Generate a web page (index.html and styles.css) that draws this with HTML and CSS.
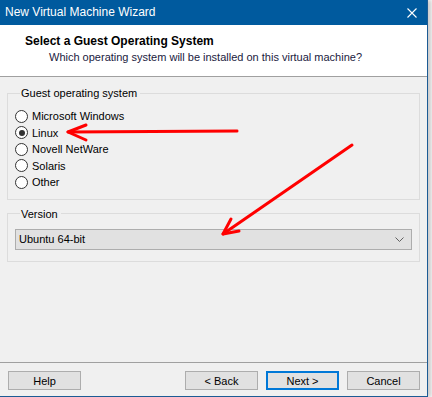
FILE: index.html
```html
<!DOCTYPE html>
<html>

<head>
    <title>New Virtual Machine Wizard</title>
    <link rel="stylesheet" href="styles.css">
</head>

<body>
    <div class="window">
        <div class="titlebar">
            <span class="title">New Virtual Machine Wizard</span>
            <svg class="close" width="10" height="10" viewBox="0 0 10 10">
                <path d="M0.5 0.5 L9.5 9.5 M9.5 0.5 L0.5 9.5" stroke="#ffffff" stroke-width="1.1" fill="none" />
            </svg>
        </div>

        <div class="header">
            <h1>Select a Guest Operating System</h1>
            <p>Which operating system will be installed on this virtual machine?</p>
        </div>

        <div class="content">
            <fieldset class="group">
                <legend>Guest operating system</legend>
                <label class="radio-row"><input type="radio" name="os"> Microsoft Windows</label>
                <label class="radio-row"><input type="radio" name="os" checked> Linux</label>
                <label class="radio-row"><input type="radio" name="os"> Novell NetWare</label>
                <label class="radio-row"><input type="radio" name="os"> Solaris</label>
                <label class="radio-row"><input type="radio" name="os"> Other</label>
            </fieldset>

            <fieldset class="group version">
                <legend>Version</legend>
                <div class="select">
                    <span>Ubuntu 64-bit</span>
                    <svg width="9" height="5" viewBox="0 0 9 5">
                        <path d="M0.5 0.5 L4.5 4.5 L8.5 0.5" stroke="#606060" stroke-width="1" fill="none" />
                    </svg>
                </div>
            </fieldset>
        </div>

        <div class="footer">
            <button class="btn">Help</button>
            <div class="spacer"></div>
            <button class="btn">&lt; Back</button>
            <button class="btn default">Next &gt;</button>
            <button class="btn">Cancel</button>
        </div>

        <!-- annotation arrows drawn over the dialog -->
        <svg class="arrows" width="428" height="397" viewBox="0 0 428 397">
            <g stroke="#ff0000" stroke-width="3" fill="none" stroke-linecap="round" stroke-linejoin="round">
                <path d="M237 131 L68 132" />
                <path d="M86 125 L68 132 L86 140" />
                <path d="M352 145 L223 234" />
                <path d="M231 219 L223 234 L239 231" />
            </g>
        </svg>
    </div>
</body>

</html>
```

FILE: styles.css
```css
body {
    margin: 0;
    background: #f7f7f7;
    font-family: 'Liberation Sans', Arial, sans-serif;
    font-size: 11px;
    color: #000000;
}

.window {
    position: relative;
    width: 427px;
    height: 396px;
    background: #f0f0f0;
    border-right: 1px solid #1c5b94;
    border-bottom: 1px solid #1c5b94;
    display: flex;
    flex-direction: column;
    box-shadow: 3px 0 4px rgba(0, 0, 0, 0.18);
}

.titlebar {
    height: 25px;
    background: #005a9e;
    color: #ffffff;
    display: flex;
    align-items: center;
    padding-left: 5px;
    padding-right: 10px;
}

.title {
    flex: 1;
    font-size: 12px;
    padding-bottom: 1px;
}

.close {
    display: block;
}

.header {
    height: 52px;
    background: #ffffff;
    border-bottom: 1px solid #a0a0a0;
    padding-left: 25px;
    box-sizing: border-box;
    padding-top: 8px;
}

.header h1 {
    margin: 0;
    font-size: 12px;
    font-weight: bold;
    line-height: 16px;
}

.header p {
    margin: 0 0 0 24px;
    line-height: 16px;
    color: #1a1a40;
}

.content {
    padding: 9px 7px 0 7px;
}

.group {
    margin: 0;
    border: 1px solid #dcdcdc;
    padding: 8px 7px 8px 7px;
}

.group legend {
    padding: 0 3px 0 1px;
    margin-left: 5px;
    line-height: 14px;
}

.radio-row {
    display: flex;
    align-items: center;
    height: 16.5px;
}

.radio-row input {
    appearance: none;
    width: 13px;
    height: 13px;
    margin: 0 4px 0 0;
    border: 1px solid #333333;
    border-radius: 50%;
    background: #ffffff;
    box-sizing: border-box;
    display: grid;
    place-items: center;
}

.radio-row input:checked::after {
    content: "";
    width: 6px;
    height: 6px;
    border-radius: 50%;
    background: #333333;
}

.version {
    margin-top: 7px;
    padding: 8px 7px 11px 7px;
}

.select {
    height: 21px;
    box-sizing: border-box;
    border: 1px solid #adadad;
    background: #e1e1e1;
    display: flex;
    align-items: center;
    justify-content: space-between;
    padding: 0 7px 0 3px;
}

.footer {
    margin-top: auto;
    border-top: 1px solid #a0a0a0;
    height: 34px;
    display: flex;
    align-items: flex-start;
    padding: 8px 7px 0 8px;
    gap: 8px;
    box-sizing: border-box;
}

.spacer {
    flex: 1;
}

.btn {
    width: 73px;
    height: 19px;
    box-sizing: border-box;
    background: #e1e1e1;
    border: 1px solid #adadad;
    font-family: 'Liberation Sans', Arial, sans-serif;
    font-size: 11px;
    padding: 0;
    color: #000000;
}

.btn.default {
    border: 2px solid #0078d7;
}

.arrows {
    position: absolute;
    left: 0;
    top: 0;
    pointer-events: none;
}
```
